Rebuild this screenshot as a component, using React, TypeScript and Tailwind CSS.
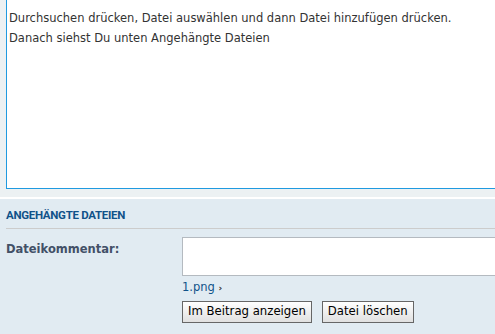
import React from 'react';

const App: React.FC = () => {
  return (
    <div className="w-[495px] h-[334px] overflow-hidden bg-white" style={{ fontFamily: '"DejaVu Sans", Verdana, sans-serif' }}>
      <div className="bg-[#ECF1F3] pl-[6px] pb-[8px] h-[197px]">
        <div className="h-[189px] w-[520px] bg-white border border-t-0 border-[#1F9AE0] pl-[2px] pt-[8px] text-[11.5px] leading-[20px] text-[#333333]">
          <p>Durchsuchen drücken, Datei auswählen und dann Datei hinzufügen drücken.</p>
          <p>Danach siehst Du unten Angehängte Dateien</p>
        </div>
      </div>
      <div className="mt-[2px] bg-[#E1EBF2] h-[135px] pl-[6px]">
        <h3 className="pt-[10px] pb-[6px] border-b border-[#CCCCCC] text-[11.5px] tracking-[-0.3px] font-bold uppercase text-[#105289] leading-[13px] font-['Roboto',sans-serif]">
          Angehängte Dateien
        </h3>
        <div className="flex mt-[8px]">
          <label className="w-[176px] shrink-0 pt-[4px] text-[11.5px] font-bold text-[#425067]">Dateikommentar:</label>
          <div className="flex flex-col shrink-0">
            <div className="w-[320px] h-[39px] bg-white border border-[#B4BAC0]" />
            <div className="mt-[3px] text-[11.5px] leading-[16px] text-[#105289]">
              1.png <span className="text-[#333] text-[9px] font-bold">›</span>
            </div>
            <div className="flex gap-[10px] mt-[5px]">
              <button className="h-[22px] px-[5px] text-[11.7px] text-black border border-[#666666] bg-gradient-to-b from-white to-[#E0E0E0]">
                Im Beitrag anzeigen
              </button>
              <button className="h-[22px] px-[5px] text-[11.7px] text-black border border-[#666666] bg-gradient-to-b from-white to-[#E0E0E0]">
                Datei löschen
              </button>
            </div>
          </div>
        </div>
      </div>
    </div>
  );
};

export default App;
